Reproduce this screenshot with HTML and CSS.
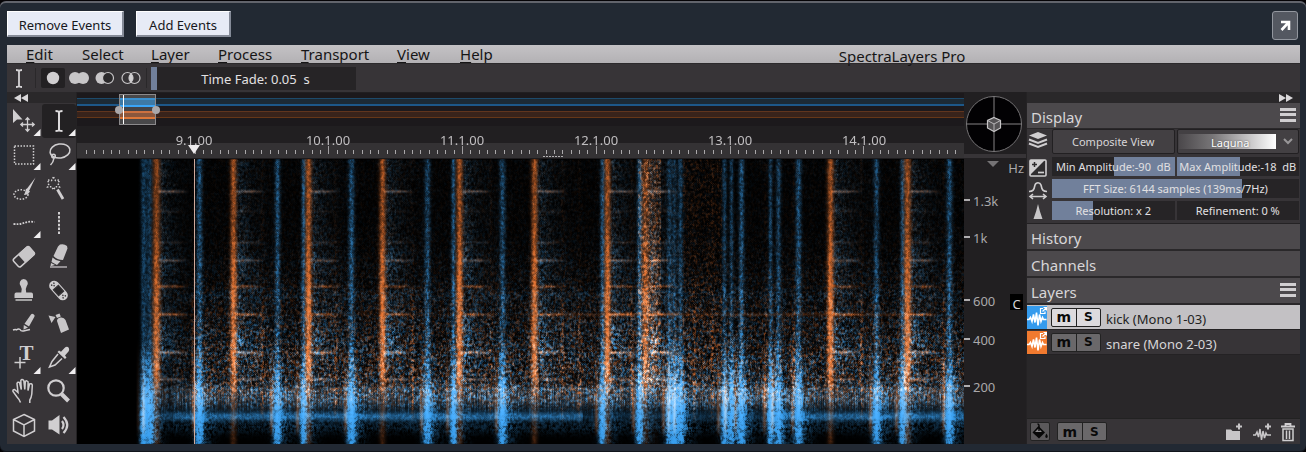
FILE: index.html
```html
<!DOCTYPE html>
<html lang="en">
<head>
<meta charset="utf-8">
<title>SpectraLayers Pro</title>
<link rel="stylesheet" href="styles.css">
</head>
<body>
<div class="frame">
  <header class="eventbar">
    <button class="event-btn event-btn-wide">Remove Events</button>
    <button class="event-btn">Add Events</button>
    <button class="popout" aria-label="Open in window">
      <svg width="12" height="12" viewBox="0 0 12 12"><path d="M2 2h8v8M9.500 2.500 2.500 10" fill="none" stroke="#fff" stroke-width="2.600"/></svg>
    </button>
  </header>

  <div class="app">
    <nav class="menubar">
      <button class="menu m-edit"><u>E</u>dit</button>
      <button class="menu m-select">Select</button>
      <button class="menu m-layer"><u>L</u>ayer</button>
      <button class="menu m-process"><u>P</u>rocess</button>
      <button class="menu m-transport"><u>T</u>ransport</button>
      <button class="menu m-view"><u>V</u>iew</button>
      <button class="menu m-help"><u>H</u>elp</button>
      <span class="app-title">SpectraLayers Pro</span>
    </nav>

    <div class="options">
      <svg class="beam" width="24" height="28" viewBox="0 0 24 28"><path d="M9 6q3 0 3 1.500Q12 6 15 6M12 7v15M9 23q3 0 3-1.500 0 1.500 3 1.500" fill="none" stroke="#d4d2d4" stroke-width="1.800"/></svg>
      <div class="modes">
        <button class="mode mode-on" aria-label="New selection"><svg width="24" height="20" viewBox="0 0 24 20"><circle cx="12" cy="10" r="6.200" fill="#d0ced0"/></svg></button>
        <button class="mode" aria-label="Add to selection"><svg width="24" height="20" viewBox="0 0 24 20"><g fill="#c8c6c8"><circle cx="8" cy="10" r="6"/><circle cx="16" cy="10" r="6"/></g></svg></button>
        <button class="mode" aria-label="Subtract from selection"><svg width="24" height="20" viewBox="0 0 24 20"><circle cx="8.500" cy="10" r="6" fill="#c8c6c8"/><circle cx="15" cy="10" r="5.500" fill="#2b292b" stroke="#c8c6c8" stroke-width="1.200"/></svg></button>
        <button class="mode" aria-label="Intersect selection"><svg width="24" height="20" viewBox="0 0 24 20"><g fill="none" stroke="#c8c6c8" stroke-width="1.200"><circle cx="8.500" cy="10" r="5.500"/><circle cx="15.500" cy="10" r="5.500"/></g><path d="M12 5.700a5.500 5.500 0 0 1 0 8.600 5.500 5.500 0 0 1 0-8.600z" fill="#d0ced0"/></svg></button>
      </div>
      <label class="slider fade"><input type="range" value="3" style="--a:0%;--b:3%"><span>Time Fade: 0.05&nbsp; s</span></label>
    </div>

    <div class="workspace">
      <aside class="toolbox">
        <button class="collapse" aria-label="Collapse tools"><svg width="16" height="8" viewBox="0 0 16 8"><path d="M8 0v8L1 4zM15 0v8L8 4z" fill="#dad8da"/></svg></button>
        <div class="tools">
          <button class="tool" aria-label="Transform"><svg viewBox="0 0 35 34"><path d="M6 5v14l4-3.500h5.500z" fill="#d0ced0"/><path d="M20.500 14v13M14 20.500h13M18.500 16l2-2.200 2 2.200M18.500 25l2 2.200 2-2.200M16 18.500l-2.200 2 2.200 2M25 18.500l2.200 2-2.200 2" fill="none" stroke="#d0ced0" stroke-width="1.300"/><path class="more" d="M33.500 25v7h-7z"/></svg></button>
          <button class="tool tool-on" aria-label="Time selection"><svg viewBox="0 0 35 34"><path d="M13.500 7q3.500 0 3.500 1.500Q17 7 20.500 7M17 8v18M13.500 27q3.500 0 3.500-1.500 0 1.500 3.500 1.500" fill="none" stroke="#dddbdd" stroke-width="2"/><path class="more" d="M33.500 25v7h-7z"/></svg></button>
          <button class="tool" aria-label="Rectangular selection"><svg viewBox="0 0 35 34"><path d="M7.500 8h19v18h-19z" class="dots"/><path class="more" d="M33.500 25v7h-7z"/></svg></button>
          <button class="tool" aria-label="Lasso selection"><svg viewBox="0 0 35 34"><g class="line"><ellipse cx="18" cy="13" rx="10" ry="7" transform="rotate(-8 18 13)"/><circle cx="11.500" cy="18" r="1.800"/><path d="M12 20q-.5 4-3.500 7"/></g><path class="more" d="M33.500 25v7h-7z"/></svg></button>
          <button class="tool" aria-label="Brush selection"><svg viewBox="0 0 35 34"><ellipse class="dots" cx="14" cy="22.500" rx="7" ry="4.700"/><path d="M28.500 5.500 22 19l-2.500-1.800zM19 16.500l4 3q-2 3.500-6 3.500 1.500-3 2-6.500z" fill="#d0ced0"/></svg></button>
          <button class="tool" aria-label="Magic wand"><svg viewBox="0 0 35 34"><path class="dots" d="M11.500 5l2 3.500 4-.5-1.500 3.500 1.500 3.500-4-.3-2 3-2-3-4 .3L7 11.500 5.500 8l4 .5z"/><path d="m15.500 17.500 5.500 9.500" stroke="#d0ced0" stroke-width="2.800"/></svg></button>
          <button class="tool" aria-label="Frequency selection"><svg viewBox="0 0 35 34"><path d="M6.500 18c7 .5 9-.5 12-1.500s6-1 9-.5" fill="none" stroke="#d0ced0" stroke-width="1.800" stroke-dasharray="1.800 1.200"/><path class="more" d="M33.500 25v7h-7z"/></svg></button>
          <button class="tool" aria-label="Transient selection"><svg viewBox="0 0 35 34"><path d="M17 6v22" stroke="#d0ced0" stroke-width="2" stroke-dasharray="2.500 1.400"/></svg></button>
          <button class="tool" aria-label="Eraser"><svg viewBox="0 0 35 34"><g transform="rotate(-42 17 17)"><rect x="6.500" y="11.500" width="21" height="10.500" rx="2" class="line"/><path d="M14 11h12a2 2 0 0 1 2 2v7.500a2 2 0 0 1-2 2H14z" fill="#c8c6c8"/></g></svg></button>
          <button class="tool" aria-label="Marker"><svg viewBox="0 0 35 34"><path d="m16 6.500 2-2q4-1.200 7 1.500l.5 2.500L21 20q-6 0-9.500-4zM10.500 17.500q3.500 3.500 8 3.800L15 25l-5.500-3zM9 23l4 2-4.500 1.300z" fill="#c8c6c8"/><path d="M8 27h17" stroke="#d0ced0" stroke-width="1.200"/></svg></button>
          <button class="tool" aria-label="Clone stamp"><svg viewBox="0 0 35 34"><path d="M16.700 5a4.300 4.300 0 0 1 3 7.200q-1.500 2-.5 6.300h5q1.800 0 1.800 2v3.500H7.500v-3.500q0-2 1.800-2h5q1-4.300-.5-6.300A4.300 4.300 0 0 1 16.700 5zM8.500 25.200h16.500v1.600H8.500z" fill="#c8c6c8"/></svg></button>
          <button class="tool" aria-label="Heal"><svg viewBox="0 0 35 34"><g transform="rotate(48 16.500 16.500)"><rect x="5" y="11.500" width="23" height="10" rx="5" fill="#d0ced0"/><rect x="12.500" y="13" width="8" height="7" fill="#2b292b" stroke="#3a383a" stroke-width="1"/><g fill="#3a383a"><circle cx="8" cy="15" r=".8"/><circle cx="8" cy="18" r=".8"/><circle cx="10" cy="16.500" r=".8"/><circle cx="25" cy="15" r=".8"/><circle cx="25" cy="18" r=".8"/><circle cx="23" cy="16.500" r=".8"/></g></g></svg></button>
          <button class="tool" aria-label="Pencil"><svg viewBox="0 0 35 34"><path d="M24 6.500q1-1.500 2.600-.3 1.700 1 .8 2.600L22 18.500l-4.500-2.700zM16.800 17l4.200 2.500-4.500 2.300z" fill="#c8c6c8"/><path class="line" d="M6 22q2-.8 3.500-.2 2-1.300 3.500-.3 1 2 3.500 1.500 3-.8 6.500-1.500"/></svg></button>
          <button class="tool" aria-label="Spray"><svg viewBox="0 0 35 34"><path d="M6.500 7.500 13.500 9l-4 6zM13.500 7l4-1.500 1.300 3-3.800 1.500zM15 13q0-3 3.500-3.500 3.500-.5 5 2.500l3.500 9.500-8 3.500z" fill="#c8c6c8"/></svg></button>
          <button class="tool" aria-label="Text"><svg viewBox="0 0 35 34"><text x="12.500" y="18" class="t-glyph">T</text><path class="line" d="M7.500 20.500h11M13 15v11.500"/><path class="more" d="M33.500 25v7h-7z"/></svg></button>
          <button class="tool" aria-label="Eyedropper"><svg viewBox="0 0 35 34"><path d="M26 5q2 2 .5 4.500l-3.500 4 1.500 2-1.500 1.500-7.500-7L17 8.500l2 1.300 3.500-3.800q1.800-1.800 3.500-1z" fill="#d0ced0"/><path class="line" d="m16 12-6 7.500-2.500 5.500 5.500-2 7-6.500"/><path class="more" d="M33.500 25v7h-7z"/></svg></button>
          <button class="tool" aria-label="Hand"><svg viewBox="0 0 35 34"><path class="line" d="M13.500 26.500q-1-3-3.500-5.500l-4-5.500q-.5-2 1.500-2l3.500 3-1-9q.5-2 2.500-1l1.800 7-.5-9q1-2 3 0l1 9 .5-8q1.500-1.500 2.800.5l-.1 8.500 1.500-6.500q2-1 2.800 1l-.5 9q-.5 4-2 6v3"/></svg></button>
          <button class="tool" aria-label="Zoom"><svg viewBox="0 0 35 34"><circle cx="14" cy="12" r="7.700" fill="none" stroke="#d0ced0" stroke-width="2.200"/><path d="m19.500 18 7 7" stroke="#d0ced0" stroke-width="4"/></svg></button>
          <button class="tool" aria-label="3D view"><svg viewBox="0 0 35 34"><path class="line" d="m17 4.500 10.500 5v11.500L17 26.500 6.500 21V9.500zM6.500 9.500 17 15l10.500-5.500M17 15v11.500"/></svg></button>
          <button class="tool" aria-label="Playback"><svg viewBox="0 0 35 34"><path d="M6.500 10.500h3.500L17.500 5v19.500L10 19.500H6.500z" fill="#d0ced0"/><path d="M20 11q3 4 0 8M21.500 7q7.500 8 0 16" fill="none" stroke="#d0ced0" stroke-width="2.200"/></svg></button>
        </div>
      </aside>

      <main class="timeline">
        <div class="overview">
          <div class="viewport"><i class="grip"></i><i class="grip"></i></div>
        </div>
        <div class="times"><span>9.1.00</span><span>10.1.00</span><span>11.1.00</span><span>12.1.00</span><span>13.1.00</span><span>14.1.00</span></div>
        <canvas class="ruler" id="ruler" width="887" height="16"></canvas>
        <canvas class="spectrogram" id="spectrogram" width="887" height="285"></canvas>
        <div class="playhead"></div>
      </main>

      <section class="axis">
        <svg class="compass" width="60" height="60" viewBox="0 0 60 60"><circle cx="30" cy="30" r="27.500" fill="#020103" stroke="#757375"/><path d="M30 2.500v55M2.500 30h55" stroke="#858385" stroke-width="1"/><path d="m30 23.500 6.500 3v7.500L30 37.500 23.500 34v-7.500z" fill="#555355" stroke="#c8c6c8" stroke-width="1.200"/><path d="m23.500 26.500 6.500 3.500 6.500-3.500M30 30v7.500" fill="none" stroke="#b8b6b8"/></svg>
        <div class="unit"><svg width="12" height="6" viewBox="0 0 12 6"><path d="M0 0h12L6 6z" fill="#757375"/></svg><span>Hz</span></div>
        <ul class="scale"><li>1.3k</li><li>1k</li><li>600</li><li>400</li><li>200</li></ul>
        <span class="key">C</span>
      </section>

      <aside class="panels">
        <button class="collapse collapse-right" aria-label="Collapse panels"><svg width="16" height="8" viewBox="0 0 16 8"><path d="M1 0v8l7-4zM8 0v8l7-4z" fill="#dad8da"/></svg></button>
        <h2 class="panel-head">Display<button class="burger" aria-label="Display menu"></button></h2>
        <div class="display">
          <svg class="row-icon" viewBox="0 0 22 22"><path d="m11 3 9 3.500-9 3.500-9-3.500z" fill="#d0ced0"/><path d="m2 10.500 9 3.500 9-3.500M2 14.500l9 3.500 9-3.500" fill="none" stroke="#d0ced0" stroke-width="2"/></svg>
          <button class="composite">Composite View</button>
          <div class="palette"><select aria-label="Palette"><option>Laguna</option></select><svg width="10" height="7" viewBox="0 0 10 7"><path d="m1 1 4 4 4-4" fill="none" stroke="#989698" stroke-width="2"/></svg></div>

          <svg class="row-icon" viewBox="0 0 22 22"><rect x="3" y="3" width="16" height="16" rx="1" fill="#2f2d2f" stroke="#d0ced0" stroke-width="1.600"/><path d="M3 3h15L3 18z" fill="#d0ced0"/><path d="M5 7.500h5M7.500 5v5" stroke="#2f2d2f" stroke-width="1.500"/><path d="M11 15.500h6" stroke="#d0ced0" stroke-width="1.700"/></svg>
          <label class="slider"><input type="range" value="50" style="--a:50%;--b:100%"><span>Min Amplitude:-90&nbsp; dB</span></label>
          <label class="slider"><input type="range" value="52" style="--a:0%;--b:52%"><span>Max Amplitude:-18&nbsp; dB</span></label>

          <svg class="row-icon" viewBox="0 0 22 22"><path d="M2 12.500c4 0 5-1.500 6-6.500 1-3 5-3 6 0 1 5 2 6.500 6 6.500M3 17.500h16M6 15l-3 2.500L6 20M16 15l3 2.500-3 2.500" fill="none" stroke="#d0ced0" stroke-width="1.600"/></svg>
          <label class="slider fft"><input type="range" value="77" style="--a:0%;--b:77%"><span>FFT Size: 6144 samples (139ms/7Hz)</span></label>

          <svg class="row-icon" viewBox="0 0 22 22"><path d="M11 3q1.500 7 4.500 15h-9Q9.500 10 11 3z" fill="#c8c6c8"/></svg>
          <label class="slider"><input type="range" value="33" style="--a:0%;--b:33%"><span>Resolution: x 2</span></label>
          <label class="slider"><input type="range" value="0" style="--a:0%;--b:0%"><span>Refinement: 0 %</span></label>
        </div>
        <h2 class="panel-head">History</h2>
        <h2 class="panel-head">Channels</h2>
        <h2 class="panel-head">Layers<button class="burger" aria-label="Layers menu"></button></h2>
        <ul class="layers">
          <li class="layer layer-on">
            <svg class="thumb blue" viewBox="0 0 20 23"><path d="M0 13.500h2l1.500-2 1.500 4 1.500-7 1.500 8 1.500-10 1.500 13 1.500-11 1.500 7 1.500-4 1 2h3" fill="none" stroke="#fff" stroke-width="1.600"/><path d="M16 2.500h-2.500v5H18V5.500M15.500 5.500 19 2M16.500 1.500H19.500V4.500" fill="none" stroke="#fff" stroke-width="1.200"/></svg>
            <span class="ms"><button aria-label="Mute kick">m</button><button aria-label="Solo kick">s</button></span>
            <span class="name">kick (Mono 1-03)</span>
          </li>
          <li class="layer">
            <svg class="thumb orange" viewBox="0 0 20 23"><path d="M0 13.500h2l1.500-2 1.500 4 1.500-7 1.500 8 1.500-10 1.500 13 1.500-11 1.500 7 1.500-4 1 2h3" fill="none" stroke="#fff" stroke-width="1.600"/><path d="M16 2.500h-2.500v5H18V5.500M15.500 5.500 19 2M16.500 1.500H19.500V4.500" fill="none" stroke="#fff" stroke-width="1.200"/></svg>
            <span class="ms"><button aria-label="Mute snare">m</button><button aria-label="Solo snare">s</button></span>
            <span class="name">snare (Mono 2-03)</span>
          </li>
        </ul>
        <footer class="layer-tools">
          <button class="bucket" aria-label="Layer color"><svg width="18" height="17" viewBox="0 0 18 17"><path d="M7.500 3 14 9.500 8 15.500 1.500 9.500z" fill="#080808"/><path d="M4 9l3.500-3.500L11 9z" fill="#8b898b"/><path d="M8 8V2.500Q8 1 6.500 1" fill="none" stroke="#080808" stroke-width="1.400"/><path d="M15.500 10.500q2.500 4 0 4.500-2.500-.5 0-4.500z" fill="#080808"/></svg></button>
          <span class="ms"><button aria-label="Mute all">m</button><button aria-label="Solo all">s</button></span>
          <span class="actions">
            <button aria-label="New group"><svg width="18" height="20" viewBox="0 0 18 20"><path d="M1 7.500h5l1.500 1.500H15v9H1zM13 1.500h2v2h2v2h-2v2h-2v-2h-2v-2h2z" fill="#c8c6c8"/></svg></button>
            <button aria-label="New layer"><svg width="18" height="20" viewBox="0 0 18 20"><path d="M0 13h2.500l1.500-3 1.500 5L7 7l1.500 11L10 9l1.500 7 1.500-5 1 2h4" fill="none" stroke="#c8c6c8" stroke-width="1.500"/><path d="M14 1.500h2v2h2v2h-2v2h-2v-2h-2v-2h2z" fill="#c8c6c8"/></svg></button>
            <button aria-label="Delete layer"><svg width="14" height="20" viewBox="0 0 14 20"><path d="M0 4.500h14M4.500 4V2h5v2" fill="none" stroke="#d0ced0" stroke-width="1.800"/><path d="M2 7h10v11.500H2zM5.500 8.500v8.500M8.500 8.500v8.500" fill="none" stroke="#d0ced0" stroke-width="1.500"/></svg></button>
          </span>
        </footer>
      </aside>
    </div>
  </div>
</div>
<script src="script.js"></script>
</body>
</html>
```
FILE: styles.css
```css
* { box-sizing: border-box; }

body {
  margin: 0;
  background: #050306;
  color: #d8d6d8;
  font-family: "Noto Sans", "Open Sans", sans-serif;
  font-size: 11px;
}

button, input, select { font: inherit; color: inherit; }
button { border: 0; padding: 0; background: none; }
svg { display: block; }
ul { margin: 0; padding: 0; list-style: none; }

.frame {
  display: flex;
  flex-direction: column;
  min-height: 100vh;
  border-top: 1px solid #050306;
  background: #222933;
  box-shadow: inset 0 2px #62646c, inset 0 -1px #11151c;
  border-radius: 6px;
  padding: 0 6px 8px 7px;
}

/* Event buttons */
.eventbar {
  display: flex;
  align-items: flex-start;
  gap: 12px;
  height: 44px;
  padding: 10px 2px 0 0;
}
.event-btn {
  width: 95px;
  height: 26px;
  border: 1px solid #fff;
  border-right: 2px solid #858b98;
  border-bottom: 2px solid #858b98;
  background: #e7ebf6;
  color: #17181c;
  font-size: 13px;
  line-height: 22px;
  padding-top: 2px;
  white-space: nowrap;
}
.event-btn-wide { width: 117px; }
.popout {
  display: grid;
  place-items: center;
  width: 26px;
  height: 29px;
  margin-left: auto;
  border: 1px solid #92969e;
  border-radius: 3px;
  background: #545861;
}

.app { display: flex; flex-direction: column; flex: 1; background: #373437; }

/* Menu bar */
.menubar {
  display: flex;
  height: 18px;
  padding-left: 19px;
  background: linear-gradient(#c4c2c5, #b3b1b4);
  color: #161516;
}
.menu {
  font-size: 15px;
  line-height: 18px;
  text-align: left;
  white-space: nowrap;
}
.menu u { text-underline-offset: 2px; text-decoration-thickness: 1px; }
.m-edit { width: 56px; }
.m-select { width: 69px; }
.m-layer { width: 67px; }
.m-process { width: 83px; }
.m-transport { width: 96px; }
.m-view { width: 63px; }
.m-help { width: 60px; }
.app-title {
  flex: 1;
  padding-right: 16px;
  font-size: 15px;
  line-height: 22px;
  text-align: center;
  white-space: nowrap;
}

/* Selection options */
.options {
  display: flex;
  align-items: center;
  height: 29px;
  border-top: 1px solid #2c2a2c;
}
.modes {
  display: flex;
  gap: 2px;
  margin-left: 4px;
  padding: 0 3px 0 5px;
  border: solid #2a282a;
  border-width: 0 1px;
}
.mode { width: 24px; height: 20px; }
.mode-on { background: #232123; border-radius: 2px; }
.fade { width: 205px; height: 23px; margin-left: 4px; font-size: 13px; }

.slider { display: grid; min-width: 0; }
.slider input {
  grid-area: 1 / 1;
  appearance: none;
  width: 100%;
  height: 100%;
  margin: 0;
  background: linear-gradient(to right, #262426 var(--a), #71809b var(--a), #71809b var(--b), #262426 var(--b));
}
.slider input::-webkit-slider-thumb { appearance: none; width: 1px; height: 1px; }
.slider span {
  grid-area: 1 / 1;
  place-self: center;
  z-index: 1;
  color: #e2e0e2;
  white-space: nowrap;
  pointer-events: none;
}
.fade span { padding: 2px 0 0 4px; }

.workspace {
  display: grid;
  grid-template-columns: 70px minmax(0, 1fr) 62px 274px;
  flex: 1;
}

/* Tools */
.collapse {
  display: flex;
  align-items: center;
  width: 100%;
  height: 11px;
  padding-left: 6px;
  background: #2a282a;
}
.collapse-right { justify-content: flex-end; padding-right: 6px; }
.toolbox { border-right: 1px solid #242224; }
.tools { display: grid; grid-template-columns: 35px 34px; grid-auto-rows: 34px; padding-top: 1px; }
.tool svg { width: 35px; height: 34px; }
.tool-on { background: #232123; border-radius: 3px; }
.more { fill: #f0eef0; }
.line { fill: none; stroke: #d0ced0; stroke-width: 1.5px; }
.dots { fill: none; stroke: #d0ced0; stroke-width: 1.5px; stroke-dasharray: 1.5px 1.5px; }
.t-glyph { font: bold 21px "Liberation Serif", serif; fill: #d0ced0; }

/* Timeline */
.timeline { position: relative; display: flex; flex-direction: column; background: #211f21; }
.overview {
  position: relative;
  height: 33px;
  margin-top: 1px;
  background: linear-gradient(#1c191c 5px, #1d4a6b 5px 6px, #1c2a35 6px 11px, #1d5788 11px 13px, #1c191c 13px 18px, #60351e 18px 19px, #38231b 19px 24px, #653718 24px 25px, #1c191c 25px);
}
.viewport {
  position: absolute;
  left: 42px;
  top: 1px;
  display: flex;
  justify-content: space-between;
  align-items: center;
  width: 37px;
  height: 31px;
  border: 1px solid #8c8a8c;
  background:
    linear-gradient(#fff, #fff) 3px 0 / 1px 100% no-repeat,
    linear-gradient(#49484a 3px, #3a90d0 3px 5px, #3e79a5 5px 10px, #3aa4f6 10px 12px, #454346 12px 16px, #cc7140 16px 18px, #8a573d 18px 22px, #dd7839 22px 24px, #49484a 24px);
}
.grip { width: 8px; height: 8px; margin: 0 -5px; border-radius: 50%; background: #aaa8aa; }
.times {
  position: relative;
  z-index: 1;
  display: grid;
  grid-template-columns: repeat(6, 134px);
  height: 17px;
  padding-left: 50px;
  font-size: 13px;
  line-height: 28px;
  text-align: center;
  white-space: nowrap;
  color: #c0bec0;
}
.ruler { width: 100%; height: 16px; flex: none; }
.spectrogram { display: block; width: 100%; flex: 1 0 284px; min-height: 284px; height: 284px; background: #000; }
.playhead { position: absolute; z-index: 2; left: 117px; top: 67px; bottom: 0; width: 1px; background: #d0a99b; }
.playhead::before {
  content: "";
  position: absolute;
  left: -6px;
  top: -14px;
  border: solid transparent;
  border-width: 9px 6px 0;
  border-top-color: #efedef;
}

/* Frequency axis */
.axis { position: relative; background: #211f21; color: #aaa8aa; font-size: 13px; }
.compass { margin: 2px 0 0; }
.unit {
  display: flex;
  justify-content: flex-end;
  gap: 9px;
  height: 24px;
  border-top: 4px solid #373437;
  padding-right: 2px;
  line-height: 21px;
}
.unit svg { margin-top: 3px; }
.scale {
  display: grid;
  grid-template-rows: 37px 63px 39px 47px;
  padding-top: 13px;
  line-height: 20px;
}
.scale li { display: flex; height: 20px; gap: 3px; }
.scale li::before { content: ""; width: 6px; height: 2px; margin-top: 8px; background: #b0aeb0; }
.key {
  position: absolute;
  right: 3px;
  top: 202px;
  width: 13px;
  height: 16px;
  background: #000;
  color: #d8d6d8;
  text-align: center;
  line-height: 20px;
}

/* Panels */
.panels { display: flex; flex-direction: column; border-left: 1px solid #242224; }
.panel-head {
  display: flex;
  justify-content: space-between;
  align-items: center;
  height: 27px;
  margin: 0;
  padding: 2px 4px 0 4px;
  border-bottom: 2px solid #2a282a;
  background: #4c494c;
  font-size: 15px;
  font-weight: 400;
}
.panel-head:first-of-type { height: 26px; border-bottom-width: 1px; }
.burger {
  width: 16px;
  height: 14px;
  margin-top: -4px;
  background: linear-gradient(#d0ced0 3px, transparent 3px 5px, #d0ced0 5px 8px, transparent 8px 11px, #d0ced0 11px);
}
.display {
  display: grid;
  grid-template-columns: 23px minmax(0, 1fr) minmax(0, 1fr);
  grid-template-rows: 25px 19px 19px 19px;
  gap: 3px 2px;
  padding: 0 1px 3px 0;
  border-bottom: 1px solid #242224;
}
.row-icon { width: 22px; height: 22px; }
.composite, .palette { border: 1px solid #222022; border-radius: 2px; background: #434043; }
.palette { display: grid; grid-template-columns: minmax(0, 1fr) 20px; align-items: center; justify-items: center; }
.palette select {
  appearance: none;
  width: 97px;
  height: 15px;
  padding: 1px 0 0 5px;
  border: 0;
  border-radius: 0;
  background: linear-gradient(to right, #4b484b, #787678 35%, #b8b6b8 65%, #fff);
  color: #fff;
  line-height: 15px;
  text-align-last: center;
  text-shadow: 0 0 2px #444;
}
.fft { grid-column: 2 / 4; }

.layers { flex: 1; background: #292729; }
.layer {
  display: flex;
  align-items: center;
  height: 25px;
  border-bottom: 1px solid #242224;
  background: #373437;
}
.layer-on { background: #c3c1c4; color: #222; }
.thumb { width: 20px; height: 23px; }
.blue { background: #359bed; }
.orange { background: #f17a2f; }
.ms {
  display: flex;
  width: 50px;
  height: 19px;
  margin-left: 4px;
  border: 1px solid #222;
  border-radius: 2px;
  background: #6a686a;
}
.layer-on .ms { background: #dddbde; }
.ms button {
  flex: 1;
  color: #0a0a0a;
  font: bold 14px/14px "DejaVu Sans", sans-serif;
}
.ms button + button { border-left: 1px solid #222; text-transform: uppercase; font-size: 12px; }
.name { margin-left: 5px; padding-top: 4px; font-size: 13px; }
.layer-tools {
  display: flex;
  align-items: center;
  height: 26px;
  padding: 0 5px 0 3px;
  border-top: 1px solid #222;
}
.bucket {
  width: 20px;
  height: 19px;
  border: 1px solid #222;
  border-radius: 2px;
  background: #5b595b;
}
.layer-tools .ms { margin-left: 7px; }
.actions { display: flex; gap: 10px; margin-left: auto; }
```
FILE: script.js
```js
// Ruler: sixteen ticks per bar, the long ones on the bar lines.
(function () {
  var c = document.getElementById('ruler').getContext('2d');
  c.fillStyle = '#343234';
  c.fillRect(0, 0, 887, 16);
  for (var i = -13; i < 92; i++) {
    var x = Math.round(117.5 + i * 8.36);
    var bar = i % 16 === 0;
    c.fillStyle = bar ? '#a09ea0' : '#aaa8aa';
    c.fillRect(x, bar ? 3 : 7, 1, bar ? 8 : 4);
  }
  c.fillStyle = '#b0aeb0';
  for (var d = 0; d < 7; d++) c.fillRect(466 + d * 3, 13, 2, 1);
  c.fillStyle = '#1d1b1d';
  c.fillRect(0, 15, 887, 1);
})();

// Spectrogram: kick layer in blue, snare layer in orange, added together.
(function () {
  var W = 887, H = 285;
  var ctx = document.getElementById('spectrogram').getContext('2d');
  var img = ctx.createImageData(W, H);
  var seed = 7;
  function rnd() {
    seed = (seed * 1664525 + 1013904223) >>> 0;
    return seed / 4294967296;
  }
  // White noise softened over neighbouring cells, a little longer vertically
  function noise() {
    var a = new Float32Array(W * H), b = new Float32Array(W * H), i;
    for (i = 0; i < a.length; i++) a[i] = rnd();
    for (i = 0; i < a.length; i++) {
      var v = 0.26 * a[i] + 0.16 * (a[i - 1] || 0) + 0.16 * (a[i + 1] || 0) +
        0.21 * (a[i - W] || 0) + 0.21 * (a[i + W] || 0);
      b[i] = Math.max(0, Math.min(1, (v - 0.5) * 2.1 + 0.45));
    }
    return b;
  }
  function bump(d, w) { return Math.exp(-(d * d) / (w * w)); }
  function ramp(v, a, b) { return Math.max(0, Math.min(1, (v - a) / (b - a))); }
  function soft(v) { return v < 0.7 ? v : 1 - 0.3 * Math.exp(-(v - 0.7) / 0.3); }
  var nb = noise(), no = noise(), ng = noise(), col = [];
  for (var k = 0; k < W; k++) col.push(rnd());

  // [x, half width, level at the top]
  var kicks = [[66, 3, .4], [72, 3, .35], [122, 2.8, .5], [200, 2.6, .48], [226, 2, .5], [274, 2.8, .5], [350, 2.8, .42],
    [376, 2, .5], [425, 2.8, .45], [525, 2.2, .5], [562, 2.3, .5], [592, 2.5, .32], [597, 2, .3], [603, 2.5, .35],
    [647, 2.2, .35], [654, 2, .35], [664, 2.5, .5], [693, 2, .4], [701, 2.5, .38], [721, 2.8, .48],
    [799, 2.6, .42], [825, 2.2, .42], [872, 2.8, .5]];
  var snares = [[79, 3.5, .85], [156, 3, .95], [231, 3, 1], [305, 3, .95], [382, 3, 1], [457, 3, .95],
    [530, 3, .95], [568, 3.5, .65], [577, 4, .15], [753, 3, 1], [830, 3.3, .95]];
  var ghosts = [116, 185, 258, 335, 413, 485, 502, 554, 617, 635, 716, 784, 688, 866];
  var harmonics = [[32, .35], [52, .08], [83, .12], [101, .3], [127, .45], [155, .55], [193, .5], [220, .35]];

  for (var y = 0; y < H; y++) {
    for (var x = 0; x < W; x++) {
      var p = y * W + x;
      var b = 0, o = 0, w = 0, i, s, d;
      var mid = ramp(y, 50, 200), low = ramp(y, 180, 250), floor = ramp(y, 265, 278);
      for (i = 0; i < kicks.length; i++) {
        d = x - kicks[i][0];
        if (Math.abs(d) > 30) continue;
        b += bump(d, kicks[i][1] * (1 + low * .45)) * (kicks[i][2] + low * .8) * (.5 + .7 * nb[p]);
        w += bump(d, 3) * .14 * bump(y - 245, 25);
        b += bump(d - 5, 9) * low * .3 * nb[p];
        o += bump(d + 6, 1.8) * low * (1 - floor) * .3;
      }
      for (i = 0; i < snares.length; i++) {
        s = snares[i];
        d = x - s[0];
        if (d < -12 || d > 48) continue;
        var body = .7 + .35 * ramp(y, 60, 130);
        var fade = 1 - ramp(y, 212, 240) * .75;
        o += bump(d, s[1]) * s[2] * body * fade * (.65 + .5 * no[p]);
        b += bump(d, s[1]) * .15 * bump(y - 190, 45) * ng[p];
        if (d > 0 && i !== 8) {
          var tail = Math.exp(-d / 12) * ramp(d, 1, 6) * (1 - low);
          b += tail * (.25 + .7 * bump(y - 185, 25) + .3 * bump(y - 105, 18)) * nb[p];
          w += tail * .3 * ng[p] * ng[p];
          for (var h = 0; h < harmonics.length; h++) {
            var e = ramp(d, 0, 4) * (1 - ramp(d, 18, 33)) * bump(y - harmonics[h][0], 1.5) * harmonics[h][1];
            o += e * .8 * (.6 + .6 * no[p]);
            if (h !== 4 && h !== 5) b += e * .5;
          }
        }
      }
      var open = x > 95 ? 1 : ramp(x, 62, 76) * .6;
      if (open) {
        for (i = 0; i < ghosts.length; i++)
          o += bump(x - ghosts[i], 1.8) * (.05 + .32 * ramp(y, 120, 190)) * (1 - ramp(y, 245, 265)) * no[p];
        var speck = open * (.07 + .5 * mid * mid) * (1 - ramp(y, 232, 252));
        if (x < 117) speck *= .5;
        b += speck * Math.pow(nb[p], 2) * .8;
        o += speck * Math.pow(no[p], 2) * .7;
        w += speck * Math.pow(ng[p], 3) * .2;
        if (x > 605 && x < 645) o += .14 * Math.pow(no[p], 2) * (1 - low);
        if (x > 560 && x < 584) {
          o += .32 * no[p] * no[p] * (1 - low);
          w += .16 * ng[p] * ng[p] * (1 - low) + .4 * ng[p] * bump(y - 219, 6);
        }
        // Striped region above the fundamental
        var stripe = bump(y - 240, 13) * open;
        b += stripe * (.14 + .5 * col[x] * nb[p]);
        o += stripe * .2 * col[(x * 7) % W] * (1 - ramp(y, 240, 256));
        w += bump(y - 230, 2) * .08 * open;
        b += bump(y - 136, 6) * .09 * nb[p] * open;
        // Held fundamental and the dim bed under it
        var quiet = (x > 505 && x < 690) ? .35 : 1;
        b += bump(y - 257, 4.5) * .6 * quiet * open * (.75 + .35 * nb[p]);
        b += bump(y - 267, 7) * .26 * open * nb[p];
        o += bump(y - 155, 1.6) * (x > 480 && x < 830 ? .14 : .03);
      }
      var edge = ramp(x, 58, 65);
      b = soft(b * edge); o = soft(o * edge); w = soft(w * edge);
      var q = p * 4;
      img.data[q] = 238 * o + 54 * b + 180 * w;
      img.data[q + 1] = 118 * o * (1 - .25 * b) + 156 * b + 180 * w;
      img.data[q + 2] = 48 * o + 236 * b * (1 - .3 * o) + 180 * w;
      img.data[q + 3] = 255;
    }
  }
  ctx.putImageData(img, 0, 0);
})();
```
